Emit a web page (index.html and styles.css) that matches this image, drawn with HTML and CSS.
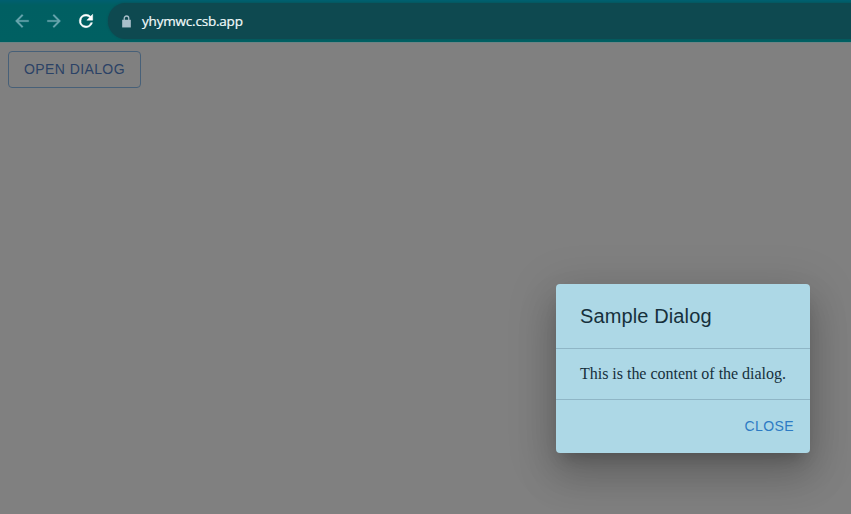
FILE: index.html
```html
<!DOCTYPE html>
<html lang="en">
<head>
<meta charset="utf-8">
<title>Sample Dialog</title>
<link rel="stylesheet" href="styles.css">
</head>
<body>
<header class="toolbar">
  <nav class="nav">
    <svg class="icon muted" viewBox="0 0 24 24"><path d="M20 11H7.83l5.59-5.59L12 4l-8 8 8 8 1.41-1.41L7.83 13H20v-2z"/></svg>
    <svg class="icon muted" viewBox="0 0 24 24"><path d="M12 4l-1.41 1.41L16.17 11H4v2h12.17l-5.58 5.59L12 20l8-8z"/></svg>
    <svg class="icon reload" viewBox="0 0 24 24"><path d="M17.65 6.35A7.96 7.96 0 0 0 12 4a8 8 0 1 0 7.73 10h-2.08A6 6 0 1 1 12 6c1.66 0 3.14.69 4.22 1.78L13 11h7V4l-2.35 2.35z"/></svg>
  </nav>
  <div class="address">
    <svg class="lock" viewBox="0 0 8 12"><path d="M0 4.4h8V11.500H0z"/><path class="shackle" d="M1.900 4.500V3a2.100 2.100 0 0 1 4.200 0v1.500"/></svg>
    <span class="url">yhymwc.csb.app</span>
  </div>
</header>
<main class="page">
  <button class="btn open">OPEN DIALOG</button>
  <section class="dialog" role="dialog">
    <h2 class="title">Sample Dialog</h2>
    <div class="content">This is the content of the dialog.</div>
    <div class="actions"><button class="btn close">CLOSE</button></div>
  </section>
</main>
</body>
</html>
```
FILE: styles.css
```css
* { box-sizing: border-box; }
body {
  margin: 0;
  height: 514px;
  display: flex;
  flex-direction: column;
  overflow: hidden;
  background: #808080;
}
.toolbar {
  flex: none;
  height: 43px;
  display: flex;
  padding-top: 3px;
  border-bottom: 1px solid #6d8384;
  background: linear-gradient(#005f70 0, #005f62 5px, #006062 42px);
}
.nav {
  display: flex;
  gap: 12px;
  padding: 8px 0 0 12px;
  width: 108px;
}
.icon { width: 20px; height: 20px; fill: #fff; }
.muted { fill: #68a5ae; stroke: #68a5ae; stroke-width: .3; }
.reload { stroke: #fff; stroke-width: .6; }
.address {
  flex: 1;
  height: 36px;
  display: flex;
  align-items: center;
  padding-left: 14px;
  border-radius: 18px 0 0 18px;
  background: #0e4950;
  box-shadow: 0 0 2px #0e4950;
}
.lock { width: 9px; height: 13px; fill: #a9bfca; }
.shackle { fill: none; stroke: #a9bfca; stroke-width: 1.2; }
.url {
  margin-left: 11px;
  font: 13.5px "Open Sans", "Noto Sans", sans-serif;
  letter-spacing: -.2px;
  -webkit-text-stroke: .2px #f2fbfc;
  color: #f2fbfc;
}
.page { flex: 1; padding: 8px; position: relative; }
.btn {
  display: block;
  background: transparent;
  border: 0;
  border-radius: 4px;
  font: 14px/24.5px "Liberation Sans", Arial, sans-serif;
  letter-spacing: .4px;
  white-space: nowrap;
}
.open {
  width: 133px;
  height: 37px;
  padding: 0;
  border: 1px solid #476078;
  color: #2b4266;
}
.dialog {
  position: absolute;
  left: 556px;
  top: 241px;
  width: 254px;
  height: 169px;
  border-radius: 4px;
  background: #add8e6;
  box-shadow: 0 11px 15px -7px rgba(0,0,0,.2), 0 24px 38px 3px rgba(0,0,0,.14), 0 9px 46px 8px rgba(0,0,0,.12);
}
.title {
  margin: 0;
  padding: 16px 24px;
  font: 400 20px/32px "Liberation Sans", Arial, sans-serif;
  letter-spacing: .12px;
  color: #16303c;
}
.content {
  height: 52px;
  padding: 16px 24px;
  border-top: 1px solid #8fb6c6;
  border-bottom: 1px solid #8fb6c6;
  font: 16px/18px "Liberation Serif", "Times New Roman", serif;
  letter-spacing: -.02px;
  color: #16303c;
  white-space: nowrap;
}
.actions { display: flex; justify-content: flex-end; padding: 8px; }
.close { height: 37px; padding: 6px 8px; color: #2d7bc4; }
```
